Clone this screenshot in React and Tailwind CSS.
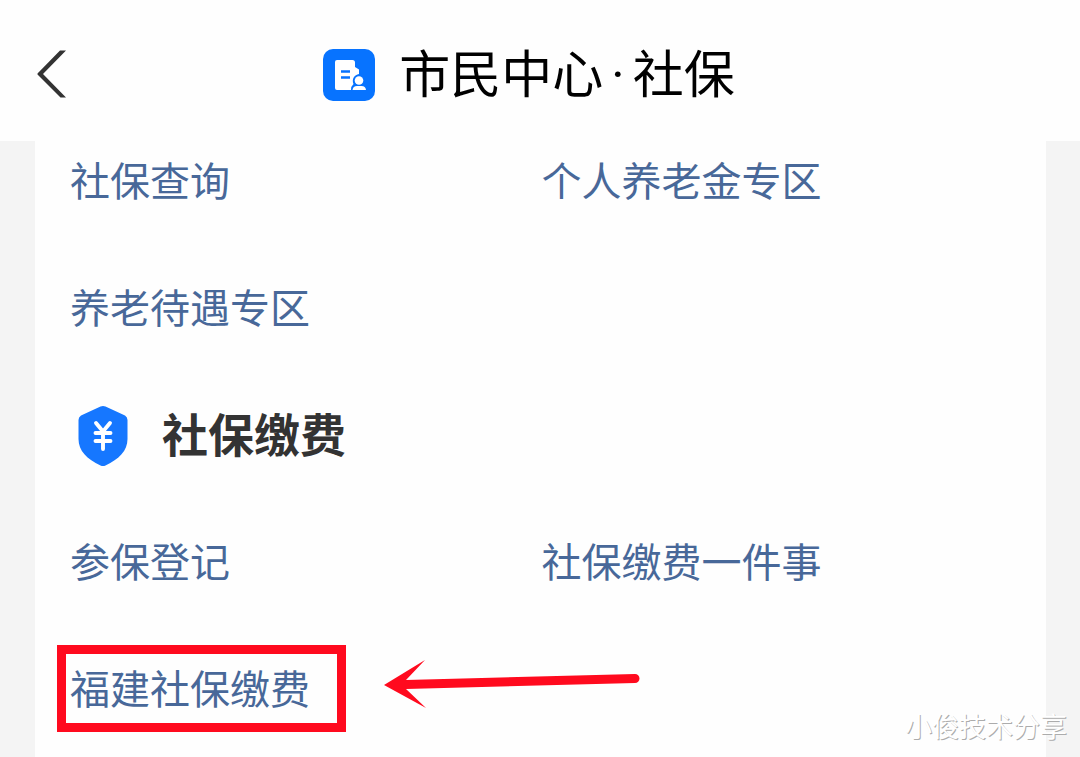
import React from "react";

const queryLinks = ["社保查询", "个人养老金专区", "养老待遇专区"];
const payLinks = ["参保登记", "社保缴费一件事", "福建社保缴费"];

const ServiceLinks = (props) => {
  const { links, marked } = props;

  return (
    <ul className="grid grid-cols-2 gap-x-[2px] gap-y-[67px]">
      {links.map((name) => (
        <li key={name} className="h-[60px] text-[40px] leading-[54px] text-[#486899]">
          {name === marked ? (
            <div className="relative inline-block">
              <a href="#">{name}</a>
              <Highlight />
            </div>
          ) : (
            <a href="#">{name}</a>
          )}
        </li>
      ))}
    </ul>
  );
};

// 红框 + 箭头标注
const Highlight = () => (
  <>
    <span className="pointer-events-none absolute -top-[15px] -right-[36px] -bottom-[18px] -left-[13px] border-[9px] border-[#ff0a1e]" />
    <svg
      className="pointer-events-none absolute top-0 left-[314px] h-[48px] w-[256px]"
      viewBox="0 0 256 48"
      fill="#ff0a1e"
      aria-hidden="true">
      <path d="M0 25 L41 0 L22 20 L251 14 A4.5 4.5 0 0 1 251 23 L22 29 L42 48 Z" />
    </svg>
  </>
);

const CenterLogo = () => (
  <svg className="size-[52px]" viewBox="0 0 52 52" aria-hidden="true">
    <rect width="52" height="52" rx="10" fill="#0773ff" />
    <path
      d="M14 11 H29.500 Q32 11 32 13.500 V18 L36 20.500 V25 A7 7 0 0 0 30.500 35 Q28 37 28 41 H14 Q12 41 12 39 V13 Q12 11 14 11 Z"
      fill="#fff"
    />
    <path d="M18 22.500 H27 M18 28.500 H27" stroke="#0773ff" strokeWidth="2.400" />
    <circle cx="36" cy="31.500" r="4.300" fill="#fff" />
    <path d="M29.500 41 Q30 37 34 37 H38.500 Q42.500 37 43 41 Z" fill="#fff" />
  </svg>
);

const PayShield = () => (
  <svg className="h-[62px] w-[50px]" viewBox="0 0 50 62" aria-hidden="true">
    <path
      d="M22.500 1.500 Q25 0.300 27.500 1.500 L47 10.500 Q49.500 12 49.500 15 V34 C49.500 46 41 54 27.500 60.500 Q25 61.700 22.500 60.500 C9 54 0.500 46 0.500 34 V15 Q0.500 12 3 10.500 Z"
      fill="#1677ff"
    />
    <path
      d="M18 18 L25 26.500 L32 18 M17.500 28 H32.500 M17.500 36 H32.500 M25 27 V44"
      fill="none"
      stroke="#fff"
      strokeWidth="3.900"
      strokeLinecap="round"
    />
  </svg>
);

const App = () => {
  return (
    <div className="relative min-h-screen overflow-hidden bg-[#f4f4f4] font-['Noto_Sans_CJK_SC',sans-serif]">
      <header className="relative flex h-[141px] items-center justify-center bg-[#fefefe] pt-[8px]">
        <button
          type="button"
          aria-label="返回"
          className="absolute top-[50px] left-[37px] cursor-pointer">
          <svg className="h-[48px] w-[30px]" viewBox="0 0 30 48" aria-hidden="true">
            <path d="M23 0.500 H29 L6 24 L29 47.500 H23.500 L0.500 24.500 V23.500 Z" fill="#333" />
          </svg>
        </button>
        <div className="flex items-center gap-[24px] pr-[22px]">
          <CenterLogo />
          <h1 className="pb-[2px] text-[51px] leading-[76px] text-black">
            市民中心
            <span className="px-[8px] font-['Roboto',sans-serif]">·</span>
            社保
          </h1>
        </div>
      </header>

      <main className="mr-[34px] ml-[35px] bg-[#fefefe] px-[35px] pt-[11px] pb-[38px]">
        <ServiceLinks links={queryLinks} />
        <div className="my-[67px] flex h-[60px] items-center gap-[34px] pl-[8px]">
          <PayShield />
          <h2 className="pb-[8px] text-[46px] leading-[60px] font-bold text-[#333]">社保缴费</h2>
        </div>
        <ServiceLinks links={payLinks} marked="福建社保缴费" />
      </main>

      {/* 水印 */}
      <p className="pointer-events-none absolute right-[13px] bottom-[12px] text-[27px] leading-[40px] text-white [text-shadow:1px_1px_0px_#acacac]">
        小俊技术分享
      </p>
    </div>
  );
};

export default App;
